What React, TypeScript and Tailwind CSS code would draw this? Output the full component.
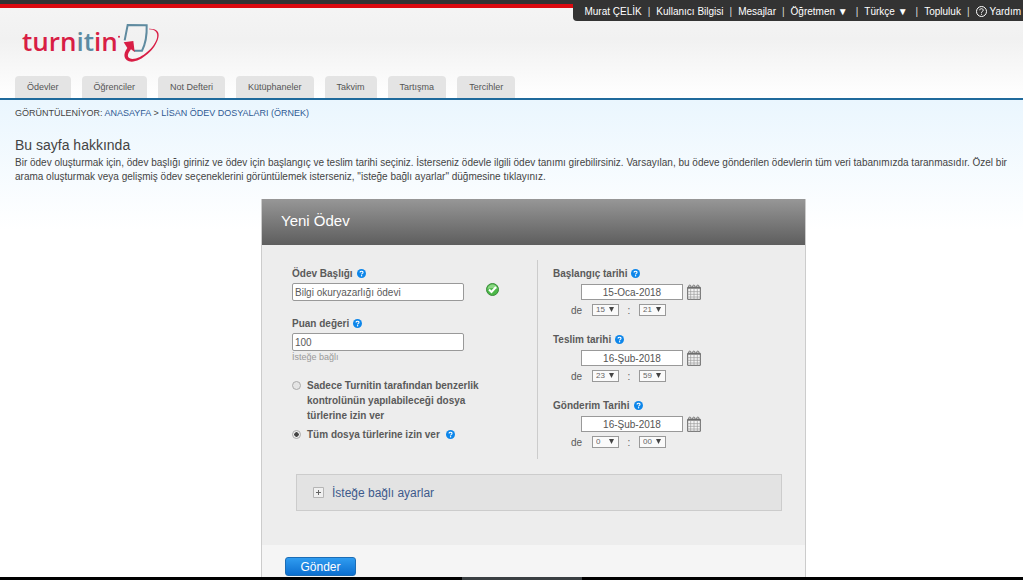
import { useState } from "react";

interface DateFieldProps {
  id: string;
  label: string;
  date: string;
  hour: string;
  minute: string;
}

const TABS = ["Ödevler", "Öğrenciler", "Not Defteri", "Kütüphaneler", "Takvim", "Tartışma", "Tercihler"];

const DATES: DateFieldProps[] = [
  { id: "start", label: "Başlangıç tarihi", date: "15-Oca-2018", hour: "15", minute: "21" },
  { id: "due", label: "Teslim tarihi", date: "16-Şub-2018", hour: "23", minute: "59" },
  { id: "post", label: "Gönderim Tarihi", date: "16-Şub-2018", hour: "0", minute: "00" },
];

function Logo() {
  return (
    <a href="#" aria-label="turnitin" className="flex items-start">
      <span className="font-['Open_Sans',sans-serif] text-[26px] leading-[40px] font-semibold text-[#d81e45]">
        turn<span className="text-[#5b8ba3]">it</span>in
      </span>
      <svg viewBox="354 60 126 126" className="h-[42px] w-[42px]" fill="none">
        <circle cx="357" cy="107" r="3" fill="#d81e45" />
        <path d="M374 118 L383 72 L440 73 C441 102 437 128 426 149 L402 149" stroke="#5f8ba0" strokeWidth="6" />
        <path
          d="M447 83 C468 82 480 91 475 110 C467 145 424 181 395 182 C371 181 367 160 382 141 L371 124 L400 120 L404 153 L393 145 C382 158 378 172 397 174 C426 173 464 139 471 111 C475 94 465 85 447 85 Z"
          fill="#d81e45"
        />
      </svg>
    </a>
  );
}

function HelpIcon() {
  return (
    <svg viewBox="0 0 18 18" className="h-[9px] w-[9px] shrink-0" fill="none">
      <circle cx="9" cy="9" r="9" fill="#0d86ea" />
      <path d="M6.2 7 C6.2 3.4 12 3.6 12 6.8 C12 8.8 9.2 8.7 9.2 11" stroke="#fff" strokeWidth="2.2" />
      <circle cx="9.2" cy="13.6" r="1.4" fill="#fff" />
    </svg>
  );
}

function CheckIcon() {
  return (
    <svg viewBox="0 0 26 26" className="h-[13px] w-[13px]" fill="none">
      <circle cx="13" cy="13" r="12" fill="#4cb848" stroke="#3a8a3a" strokeWidth="2" />
      <path d="M3 12 C4 0 22 0 23 12 C17 9 9 9 3 12Z" fill="#8bd684" />
      <path d="M6 13 L11 18 L20 8" stroke="#fff" strokeWidth="4" />
    </svg>
  );
}

function CalendarIcon() {
  return (
    <svg viewBox="0 0 42 48" className="h-[16px] w-[14px]" fill="none" stroke="#666">
      <path d="M2 10 H40 V46 H2 Z" fill="#f4f4f4" strokeWidth="3" />
      <path d="M2 12 H40" strokeWidth="4" />
      <path d="M11 15 V46 M21 15 V46 M31 15 V46 M2 23 H40 M2 31 H40 M2 39 H40" stroke="#999" strokeWidth="2" />
      <path d="M5 9 C5 1 12 1 12 9 M17 9 C17 1 24 1 24 9 M29 9 C29 1 36 1 36 9" strokeWidth="3" />
    </svg>
  );
}

function TimeSelect({ label, value }: { label: string; value: string }) {
  return (
    <div className="relative">
      <select
        aria-label={label}
        defaultValue={value}
        className="block h-[12px] w-[27px] appearance-none border border-[#999] bg-[#fafafa] pl-[3px] text-[8px] leading-[10px] text-[#666]"
      >
        <option>{value}</option>
      </select>
      <svg viewBox="0 0 10 10" className="pointer-events-none absolute top-[3px] right-[5px] h-[5px] w-[5px]">
        <path d="M0 0 H10 L5 10 Z" fill="#444" />
      </svg>
    </div>
  );
}

function DateField({ id, label, date, hour, minute }: DateFieldProps) {
  return (
    <div className="mb-[15px] text-[10px]">
      <div className="flex h-4 items-center gap-1">
        <label htmlFor={id} className="font-bold">{label}</label>
        <HelpIcon />
      </div>
      <div className="mt-[3px] ml-7 flex items-center gap-1">
        <input
          id={id}
          defaultValue={date}
          className="h-4 w-[102px] border border-[#999] bg-white text-center text-[10px] text-[#555]"
        />
        <button type="button" aria-label="Takvim">
          <CalendarIcon />
        </button>
      </div>
      <div className="mt-1 ml-[18px] flex h-3 items-center">
        <span className="w-[21px]">de</span>
        <TimeSelect label={`${label} saat`} value={hour} />
        <span className="w-5 text-center">:</span>
        <TimeSelect label={`${label} dakika`} value={minute} />
      </div>
    </div>
  );
}

function TopNav() {
  const sep = <span className="text-[#ddd]">|</span>;
  return (
    <nav className="flex h-[21px] items-center gap-[6px] rounded-bl bg-[#333] pt-[2px] pr-[2px] pl-[11px] text-[10px] whitespace-nowrap text-white">
      <a href="#">Murat ÇELİK</a>
      {sep}
      <a href="#">Kullanıcı Bilgisi</a>
      {sep}
      <a href="#">Mesajlar</a>
      {sep}
      <a href="#" className="mr-[2px]">Öğretmen ▼</a>
      {sep}
      <a href="#" className="mr-[2px]">Türkçe ▼</a>
      {sep}
      <a href="#">Topluluk</a>
      {sep}
      <a href="#" className="flex items-center gap-[3px]">
        <svg viewBox="0 0 22 22" className="h-[11px] w-[11px]" fill="none" stroke="#fff" strokeWidth="2">
          <circle cx="11" cy="11" r="10" />
          <path d="M7.5 8.5 C7.5 4 14.5 4.5 14.5 8.5 C14.5 11 11 10.5 11 13.5 M11 15.5 V17.5" />
        </svg>
        Yardım
      </a>
    </nav>
  );
}

export default function App() {
  const [fileTypes, setFileTypes] = useState("all");

  return (
    <div className="flex min-h-screen flex-col bg-white font-['Liberation_Sans',Arial,sans-serif] text-[#444]">
      <header className="border-b-2 border-[#1f6a9c] bg-linear-to-b from-[#f5f5f5] via-[#f1f1f1] via-40% to-white">
        <div className="flex h-[21px] items-start">
          <div className="h-2 flex-1 border-t-4 border-b-4 border-t-[#333] border-b-[#dc0a10]" />
          <TopNav />
        </div>
        <div className="h-[55px] pl-[22px]">
          <Logo />
        </div>
        <nav className="flex gap-[11px] pl-[15px]">
          {TABS.map((tab) => (
            <a key={tab} href="#" className="h-[22px] rounded-t bg-[#e4e4e4] px-3 text-[9px] leading-[22px] text-[#555]">
              {tab}
            </a>
          ))}
        </nav>
      </header>

      <main className="flex flex-1 flex-col bg-linear-to-b from-[#eaf6fe] to-white to-[130px] pr-[10px] pl-[15px]">
        <div className="pt-[5px] text-[9px] leading-4">
          GÖRÜNTÜLENİYOR: <a href="#" className="text-[#2f5a94]">ANASAYFA</a> &gt;{" "}
          <a href="#" className="text-[#2f5a94]">LİSAN ÖDEV DOSYALARI (ÖRNEK)</a>
        </div>
        <h1 className="mt-4 text-[14px] leading-4">Bu sayfa hakkında</h1>
        <p className="mt-[3px] text-[10px] leading-[14px]">
          Bir ödev oluşturmak için, ödev başlığı giriniz ve ödev için başlangıç ve teslim tarihi seçiniz. İsterseniz ödevle
          ilgili ödev tanımı girebilirsiniz. Varsayılan, bu ödeve gönderilen ödevlerin tüm veri tabanımızda taranmasıdır.
          Özel bir arama oluşturmak veya gelişmiş ödev seçeneklerini görüntülemek isterseniz, "isteğe bağlı ayarlar"
          düğmesine tıklayınız.
        </p>

        <form className="mt-[15px] flex w-full flex-1 flex-col pl-[39px]" onSubmit={(e) => e.preventDefault()}>
          <div className="mx-auto flex w-full max-w-[545px] flex-1 flex-col border-x border-[#ccc] bg-[#ededed] text-[#5a5a5a]">
            <h2 className="h-[46px] bg-linear-to-b from-[#979797] to-[#5e5e5e] pl-[19px] text-[15px] leading-[44px] text-white">
              Yeni Ödev
            </h2>
            <div className="flex pt-[15px]">
              <div className="flex-1 pt-[5px] pl-[30px] text-[10px]">
                <div className="flex h-4 items-center gap-1">
                  <label htmlFor="title" className="font-bold">Ödev Başlığı</label>
                  <HelpIcon />
                </div>
                <div className="mt-[2px] flex items-start gap-[22px]">
                  <input
                    id="title"
                    defaultValue="Bilgi okuryazarlığı ödevi"
                    className="h-[18px] w-[172px] rounded-[2px] border border-[#999] bg-white px-[2px]"
                  />
                  <CheckIcon />
                </div>
                <div className="mt-[14px] flex h-4 items-center gap-1">
                  <label htmlFor="points" className="font-bold">Puan değeri</label>
                  <HelpIcon />
                </div>
                <input
                  id="points"
                  defaultValue="100"
                  className="mt-[2px] block h-[18px] w-[172px] rounded-[2px] border border-[#999] bg-white px-[2px]"
                />
                <div className="text-[9px] leading-3 text-[#999]">İsteğe bağlı</div>

                <div className="mt-[15px] flex items-start gap-[6px] font-bold">
                  <input
                    type="radio"
                    id="similarity"
                    name="types"
                    checked={fileTypes === "similarity"}
                    onChange={() => setFileTypes("similarity")}
                    className="mt-[3px] h-[9px] w-[9px] shrink-0 appearance-none rounded-full border border-[#aaa] bg-[#e4e4e4] checked:bg-radial checked:from-[#444] checked:from-40% checked:to-[#eee] checked:to-50%"
                  />
                  <label htmlFor="similarity" className="w-[176px] leading-[15px]">
                    Sadece Turnitin tarafından benzerlik kontrolünün yapılabileceği dosya türlerine izin ver
                  </label>
                </div>
                <div className="mt-1 flex items-center gap-[6px] font-bold">
                  <input
                    type="radio"
                    id="all"
                    name="types"
                    checked={fileTypes === "all"}
                    onChange={() => setFileTypes("all")}
                    className="h-[9px] w-[9px] shrink-0 appearance-none rounded-full border border-[#aaa] bg-[#e4e4e4] checked:bg-radial checked:from-[#444] checked:from-40% checked:to-[#eee] checked:to-50%"
                  />
                  <label htmlFor="all" className="leading-[15px]">Tüm dosya türlerine izin ver</label>
                  <HelpIcon />
                </div>
              </div>
              <div className="h-[199px] w-[268px] border-l border-[#ccc] pt-[5px] pl-[15px]">
                {DATES.map((d) => (
                  <DateField key={d.id} {...d} />
                ))}
              </div>
            </div>

            <div className="mt-[15px] mr-[23px] ml-[34px] border border-[#ccc] bg-[#e3e3e3]">
              <button type="button" className="flex h-[35px] items-center gap-2 pl-4 text-[12px] text-[#3d5a8c]">
                <svg viewBox="0 0 11 11" className="h-[11px] w-[11px]">
                  <path d="M0.5 0.5 H10.5 V10.5 H0.5 Z" fill="#f0f0f0" stroke="#b5b5b5" />
                  <path d="M3 5.5 H8 M5.5 3 V8" stroke="#666" />
                </svg>
                İsteğe bağlı ayarlar
              </button>
            </div>

            <div className="mt-[34px] flex-1 bg-[#f5f5f5] pt-3 pl-[23px]">
              <button
                type="submit"
                className="block h-[19px] w-[71px] rounded-[3px] border border-[#1c6db5] bg-linear-to-b from-[#2f9cf0] to-[#0b6fd0] text-[12px] leading-[16px] text-white"
              >
                Gönder
              </button>
            </div>
          </div>
        </form>
      </main>
      <footer className="flex h-[3px] justify-center bg-black pl-5">
        <div className="h-full w-[120px] bg-[#3a3f42]" />
      </footer>
    </div>
  );
}
